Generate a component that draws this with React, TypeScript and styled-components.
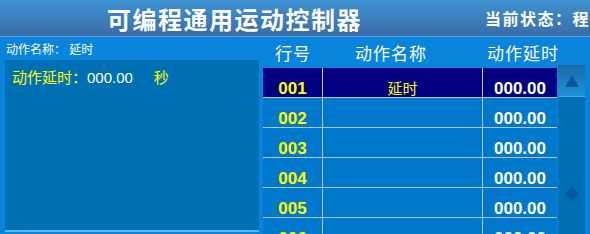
import styled, { createGlobalStyle } from "styled-components";

const GlobalStyle = createGlobalStyle`
  html, body {
    margin: 0;
    padding: 0;
    background: #0884dc;
  }
  body {
    font-family: "Liberation Sans", "Noto Sans CJK SC", sans-serif;
  }
`;

const Screen = styled.div`
  width: 590px;
  height: 234px;
  overflow: hidden;
  background: #0884dc;
  display: flex;
  flex-direction: column;
`;

const TitleBar = styled.div`
  height: 36px;
  flex: none;
  background: linear-gradient(#3e92d2, #3a6ca8);
  border-bottom: 1px solid #5aa0d8;
  display: flex;
  align-items: center;
  color: #ffffff;
  font-weight: bold;
  white-space: nowrap;
`;

const Title = styled.div`
  margin-left: 107px;
  font-size: 24px;
  letter-spacing: 1.5px;
`;

const Status = styled.div`
  margin-left: 123px;
  font-size: 16px;
  letter-spacing: 1.5px;
`;

const Body = styled.div`
  flex: 1;
  display: flex;
  min-height: 0;
`;

const LeftColumn = styled.div`
  width: 254px;
  padding-left: 5px;
  display: flex;
  flex-direction: column;
`;

const ActionLabel = styled.div`
  height: 23px;
  padding-left: 1px;
  display: flex;
  align-items: center;
  font-size: 12px;
  color: #ffffff;
  white-space: pre;
`;

const EditPanel = styled.div`
  height: 172px;
  background: #0070b4;
  border-bottom: 2px solid #62b8f0;
  padding: 6px 0 0 7px;
  box-sizing: border-box;
  font-size: 15px;
  white-space: pre;
`;

const Yellow = styled.span`
  color: #ffff00;
`;

const White = styled.span`
  color: #ffffff;
`;

const RightColumn = styled.div`
  flex: 1;
  padding-left: 4px;
  display: flex;
  flex-direction: column;
`;

const HeaderRow = styled.div`
  height: 30px;
  padding-top: 3px;
  box-sizing: border-box;
  display: grid;
  grid-template-columns: 60px 160px 74px;
  align-items: center;
  color: #ffffff;
  font-size: 17px;
  letter-spacing: 1px;
  white-space: nowrap;
`;

const HeaderCell = styled.div<{ shift?: number }>`
  text-align: center;
  transform: translateX(${(p) => p.shift ?? 0}px);
`;

const TableArea = styled.div`
  display: flex;
  align-items: flex-start;
`;

const Table = styled.div`
  width: 294px;
  margin-top: 3px;
`;

const Row = styled.div<{ selected?: boolean }>`
  height: 29px;
  display: grid;
  grid-template-columns: 60px 160px 74px;
  background: ${(p) => (p.selected ? "#000080" : "#0078cc")};
  border-bottom: 1px solid #b8c4d8;
`;

const Cell = styled.div<{ color: string; bold?: boolean; lined?: boolean }>`
  display: flex;
  justify-content: center;
  align-items: flex-start;
  padding-top: 12px;
  line-height: 17px;
  color: ${(p) => p.color};
  font-size: ${(p) => (p.bold ? 17 : 15)}px;
  font-weight: ${(p) => (p.bold ? "bold" : "normal")};
  border-right: ${(p) => (p.lined ? "1px solid #b8c4d8" : "none")};
`;

const ScrollBar = styled.div`
  width: 27px;
  margin-left: 1px;
  height: 170px;
  background: #0070b4;
  display: flex;
  flex-direction: column;
  align-items: center;
`;

const ScrollButton = styled.div`
  width: 100%;
  height: 31px;
  background: linear-gradient(#1a6aa4, #1a94d8);
  border-bottom: 1px solid #3aa8e8;
  display: flex;
  align-items: center;
  justify-content: center;
`;

const Thumb = styled.div`
  width: 10px;
  height: 10px;
  margin-top: 92px;
  background: #0a58a0;
  transform: rotate(45deg);
`;

const rows = ["001", "002", "003", "004", "005", "006"];

export default function App() {
  return (
    <Screen>
      <GlobalStyle />
      <TitleBar>
        <Title>可编程通用运动控制器</Title>
        <Status>当前状态：程序编辑</Status>
      </TitleBar>
      <Body>
        <LeftColumn>
          <ActionLabel>{"动作名称： 延时"}</ActionLabel>
          <EditPanel>
            <Yellow>动作延时：</Yellow>
            <White>000.00</White>
            <Yellow>{"     秒"}</Yellow>
          </EditPanel>
        </LeftColumn>
        <RightColumn>
          <HeaderRow>
            <HeaderCell>行号</HeaderCell>
            <HeaderCell shift={-12}>动作名称</HeaderCell>
            <HeaderCell shift={3}>动作延时</HeaderCell>
          </HeaderRow>
          <TableArea>
            <Table>
              {rows.map((n, i) => (
                <Row key={n} selected={i === 0}>
                  <Cell color="#ffff00" bold lined>
                    {n}
                  </Cell>
                  <Cell color="#ffff00" lined>
                    {i === 0 ? "延时" : ""}
                  </Cell>
                  <Cell color="#ffffff" bold>
                    000.00
                  </Cell>
                </Row>
              ))}
            </Table>
            <ScrollBar>
              <ScrollButton>
                <svg width="14" height="12" viewBox="0 0 14 12">
                  <polygon points="7,0 14,12 0,12" fill="#0a58a0" />
                </svg>
              </ScrollButton>
              <Thumb />
            </ScrollBar>
          </TableArea>
        </RightColumn>
      </Body>
    </Screen>
  );
}
